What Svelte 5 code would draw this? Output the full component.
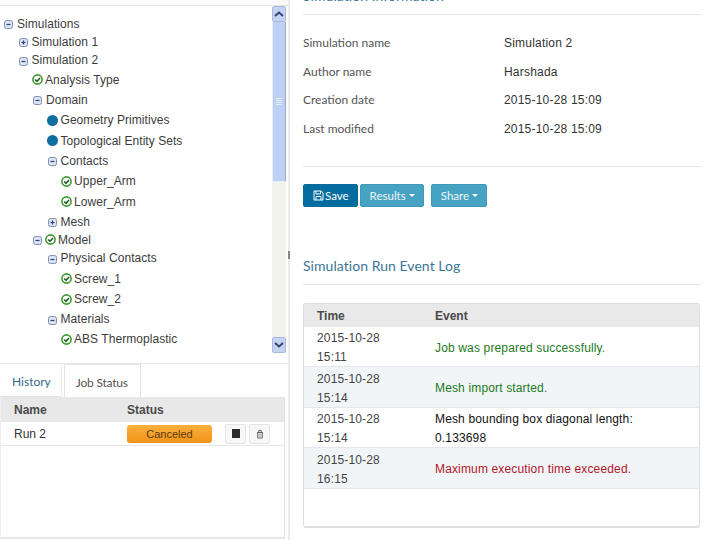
<script>
	const tree = [
		{ label: 'Simulations', depth: 0, icons: ['minus'], size: 'tight' },
		{ label: 'Simulation 1', depth: 1, icons: ['plus'], size: 'tight' },
		{ label: 'Simulation 2', depth: 1, icons: ['minus'], size: 'mid' },
		{ label: 'Analysis Type', depth: 2, icons: ['check'] },
		{ label: 'Domain', depth: 2, icons: ['minus'] },
		{ label: 'Geometry Primitives', depth: 3, icons: ['dot'] },
		{ label: 'Topological Entity Sets', depth: 3, icons: ['dot'] },
		{ label: 'Contacts', depth: 3, icons: ['minus'] },
		{ label: 'Upper_Arm', depth: 4, icons: ['check'] },
		{ label: 'Lower_Arm', depth: 4, icons: ['check'] },
		{ label: 'Mesh', depth: 3, icons: ['plus'], size: 'mesh' },
		{ label: 'Model', depth: 2, icons: ['minus', 'check'], size: 'model' },
		{ label: 'Physical Contacts', depth: 3, icons: ['minus'] },
		{ label: 'Screw_1', depth: 4, icons: ['check'] },
		{ label: 'Screw_2', depth: 4, icons: ['check'] },
		{ label: 'Materials', depth: 3, icons: ['minus'] },
		{ label: 'ABS Thermoplastic', depth: 4, icons: ['check'], size: 'last' },
	];

	const info = [
		['Simulation name', 'Simulation 2'],
		['Author name', 'Harshada'],
		['Creation date', '2015-10-28 15:09'],
		['Last modified', '2015-10-28 15:09'],
	];

	const events = [
		{ time: ['2015-10-28', '15:11'], text: ['Job was prepared successfully.'], kind: 'ok' },
		{ time: ['2015-10-28', '15:14'], text: ['Mesh import started.'], kind: 'ok' },
		{ time: ['2015-10-28', '15:14'], text: ['Mesh bounding box diagonal length:', '0.133698'], kind: '' },
		{ time: ['2015-10-28', '16:15'], text: ['Maximum execution time exceeded.'], kind: 'bad' },
	];
</script>

<div class="page">
	<aside class="left">
		<div class="tree-pane">
			<div class="tree">
				{#each tree as node}
					<div class="node {node.size ?? ''}" style="padding-left: {4 + node.depth * 14.5}px">
						{#each node.icons as icon}
							{#if icon === 'minus' || icon === 'plus'}
								<svg class="toggler" viewBox="0 0 9 9" width="9" height="9">
									<rect x="0.5" y="0.5" width="8" height="8" rx="2" fill="#dde3f0" stroke="#7d8fb5" />
									<path d="M2.5 4.5h4" stroke="#2f4578" stroke-width="1.2" />
									{#if icon === 'plus'}
										<path d="M4.5 2.5v4" stroke="#2f4578" stroke-width="1.2" />
									{/if}
								</svg>
							{:else if icon === 'check'}
								<svg class="check" viewBox="0 0 11 11" width="11" height="11">
									<circle cx="5.5" cy="5.5" r="4.6" fill="#fff" stroke="#3f9a32" stroke-width="1.6" />
									<path d="M3.2 5.5l1.8 1.8 3-3.3" fill="none" stroke="#1d5c22" stroke-width="1.5" />
								</svg>
							{:else}
								<span class="dot"></span>
							{/if}
						{/each}
						<span>{node.label}</span>
					</div>
				{/each}
			</div>
			<div class="scrollbar">
				<div class="sb-btn">
					<svg viewBox="0 0 10 6" width="10" height="6"><path d="M1 5l4-3.5L9 5" fill="none" stroke="#34466f" stroke-width="2" /></svg>
				</div>
				<div class="sb-thumb"><i></i><i></i><i></i><i></i></div>
				<div class="sb-track"></div>
				<div class="sb-btn">
					<svg viewBox="0 0 10 6" width="10" height="6"><path d="M1 1l4 3.5L9 1" fill="none" stroke="#34466f" stroke-width="2" /></svg>
				</div>
			</div>
		</div>

		<div class="tabs">
			<div class="tab">History</div>
			<div class="tab active">Job Status</div>
		</div>
		<div class="jobs">
			<div class="jobs-head">
				<span class="col-name">Name</span>
				<span>Status</span>
			</div>
			<div class="jobs-row">
				<span class="col-name">Run 2</span>
				<span class="badge">Canceled</span>
				<button class="mini stop" aria-label="Stop"><span></span></button>
				<button class="mini" aria-label="Delete">
					<svg viewBox="0 0 8 10" width="8" height="10">
						<path d="M1 3.5h6M1.7 3.5v5.5h4.6V3.5M2.8 3V1.4h2.4V3" fill="none" stroke="#666" />
						<path d="M2.5 5.2h3M2.5 7h3" stroke="#999" />
					</svg>
				</button>
			</div>
		</div>
	</aside>

	<div class="splitter"><span></span></div>

	<main class="right">
		<h2 class="clipped">Simulation Information</h2>
		<dl class="info">
			{#each info as [key, value]}
				<div class="info-row">
					<dt>{key}</dt>
					<dd>{value}</dd>
				</div>
			{/each}
		</dl>
		<div class="actions">
			<button class="btn primary">
				<svg viewBox="0 0 11 11" width="11" height="11">
					<path d="M1 1h7.2L10 2.8V10H1zM3 1v3h4.5V1M3 10V6.5h5V10" fill="none" stroke="#fff" />
				</svg>Save
			</button>
			<button class="btn info-btn">Results<b></b></button>
			<button class="btn info-btn share">Share<b></b></button>
		</div>

		<h2 class="log-title">Simulation Run Event Log</h2>
		<div class="log">
			<div class="log-head">
				<span class="col-time">Time</span>
				<span>Event</span>
			</div>
			{#each events as ev, i}
				<div class="log-row" class:odd={i % 2 === 1}>
					<div class="col-time">
						{#each ev.time as line}<div>{line}</div>{/each}
					</div>
					<div class="log-text {ev.kind}">
						{#each ev.text as line}<div>{line}</div>{/each}
					</div>
				</div>
			{/each}
		</div>
	</main>
</div>

<style>
	:global(body) {
		background: #fff;
	}

	.page {
		display: flex;
		width: 705px;
		height: 540px;
		overflow: hidden;
		font-family: 'Liberation Sans', Arial, sans-serif;
		font-size: 12px;
		color: #333;
	}

	.left {
		width: 288px;
		flex: none;
		display: flex;
		flex-direction: column;
		background: #fff;
	}

	.tree-pane {
		display: flex;
		height: 357px;
		margin-top: 5px;
		border-top: 1px solid #e4e4e4;
		border-bottom: 1px solid #e6e6e6;
		box-shadow: 0 -5px 0 #fafafa;
		box-sizing: content-box;
	}

	.tree {
		flex: 1;
		padding-top: 8.6px;
		letter-spacing: 0.05px;
	}

	.node {
		display: flex;
		align-items: center;
		gap: 3px;
		height: 20.33px;
		color: #3c3c3c;
	}

	.node.tight {
		height: 18px;
	}

	.node.mid {
		height: 18.9px;
	}

	.node.mesh {
		height: 19.7px;
	}

	.node.model {
		height: 16.8px;
	}

	.node.last {
		height: 19px;
	}

	.toggler {
		margin-right: 1px;
		margin-top: 2px;
	}

	.check {
		margin-left: -1px;
		margin-right: -1px;
	}

	.dot {
		width: 11px;
		height: 11px;
		margin-left: -1px;
		border-radius: 50%;
		background: #0f6d9f;
	}

	.scrollbar {
		width: 14px;
		margin-right: 2px;
		display: flex;
		flex-direction: column;
		height: 347px;
		flex: none;
	}

	.sb-btn {
		height: 16px;
		flex: none;
		display: flex;
		align-items: center;
		justify-content: center;
		background: #c5d3f3;
		border: 1px solid #e8eef9;
		outline: 1px solid #a9b9dd;
		outline-offset: -1px;
		border-radius: 2px;
		box-sizing: border-box;
	}

	.sb-thumb {
		height: 160px;
		flex: none;
		display: flex;
		flex-direction: column;
		align-items: center;
		justify-content: center;
		gap: 1px;
		background: #bfd0f5;
		border: 1px solid #e6edfb;
		border-top: 0;
		border-right-color: #98a9cf;
		box-sizing: border-box;
	}

	.sb-thumb i {
		display: block;
		width: 6px;
		height: 1px;
		background: #e6edfb;
	}

	.sb-track {
		flex: 1;
		background: #f2f2ec;
	}

	.tabs {
		display: flex;
		gap: 2px;
		height: 33px;
		box-sizing: border-box;
		font-family: Lato, sans-serif;
		font-size: 12px;
	}

	.tab {
		padding: 10px 10px 0 12px;
		color: #33698a;
		border-right: 1px solid #eee;
		border-bottom: 1px solid #e4e4e4;
	}

	.tab.active {
		color: #555;
		border: 1px solid #e4e4e4;
		border-bottom: 0;
		padding: 10px 12px 0 11px;
		letter-spacing: -0.2px;
	}

	.jobs {
		flex: 1;
		margin-right: 3px;
		border-right: 1px solid #e2e2e2;
		border-left: 1px solid #eee;
		border-bottom: 2px solid #e8e8e8;
		margin-bottom: 1px;
	}

	.jobs-head {
		display: flex;
		align-items: center;
		height: 25px;
		background: #e8e8e8;
		font-weight: bold;
		color: #4a4a4a;
	}

	.col-name {
		width: 113px;
		padding-left: 13px;
		flex: none;
	}

	.jobs-row {
		display: flex;
		align-items: center;
		height: 23px;
		border-bottom: 1px solid #e6e6e6;
		box-sizing: content-box;
	}

	.jobs-row .col-name {
		color: #333;
	}

	.badge {
		width: 85px;
		height: 18px;
		display: flex;
		align-items: center;
		justify-content: center;
		background: linear-gradient(#fbb03c, #f0921a);
		border-radius: 3px;
		font-size: 11px;
		color: #5a3a10;
		margin-right: 13px;
	}

	.mini {
		width: 21px;
		height: 20px;
		padding: 0;
		margin-right: 3px;
		display: flex;
		align-items: center;
		justify-content: center;
		background: #f7f7f7;
		border: 1px solid #e4e4e4;
		border-radius: 2px;
	}

	.stop span {
		display: block;
		width: 8px;
		height: 9px;
		background: #2b2b2b;
	}

	.splitter {
		width: 2px;
		flex: none;
		background: #e9e9e9;
		position: relative;
	}

	.splitter span {
		position: absolute;
		left: 0;
		top: 251px;
		width: 2px;
		height: 8px;
		background: #888;
	}

	.right {
		flex: 1;
		padding: 0 5px 0 13px;
		min-width: 0;
	}

	h2 {
		margin: 0;
		font-family: Lato, sans-serif;
		font-weight: 400;
		font-size: 14px;
		letter-spacing: 0.05px;
		color: #3b7595;
		border-bottom: 1px solid #e4e4e4;
	}

	.clipped {
		margin-top: -12px;
		height: 26px;
		line-height: 16px;
	}

	.info {
		margin: 13.5px 0 0;
		padding-bottom: 22.5px;
		border-bottom: 1px solid #e4e4e4;
	}

	.info-row {
		display: flex;
		align-items: center;
		height: 28.7px;
	}

	dt {
		width: 201px;
		font-family: Lato, sans-serif;
		color: #555;
		margin-top: -1px;
	}

	dd {
		margin: 0;
		color: #333;
		letter-spacing: 0.2px;
	}

	.actions {
		display: flex;
		gap: 2px;
		margin-top: 17px;
		height: 24px;
	}

	.btn {
		height: 23px;
		padding: 0 8px 0 9px;
		display: flex;
		align-items: center;
		gap: 1px;
		font-family: Lato, sans-serif;
		font-size: 11.5px;
		color: #fff;
		border: 1px solid #0a6a9a;
		border-radius: 2px;
		background: #056c9f;
	}

	.info-btn {
		background: #46a3c2;
		border-color: #3f99b8;
		color: #eef7fa;
	}

	.share {
		margin-left: 5px;
	}

	.btn b {
		display: inline-block;
		margin-left: 2px;
		border: 3px solid transparent;
		border-top-color: #fff;
		border-bottom: 0;
	}

	.log-title {
		margin-top: 49px;
		height: 28px;
		line-height: 17px;
		box-sizing: border-box;
	}

	.log {
		margin-top: 18px;
		height: 225px;
		border: 1px solid #dedede;
		border-bottom-width: 2px;
		border-radius: 3px;
		box-sizing: border-box;
		overflow: hidden;
	}

	.log-head {
		display: flex;
		align-items: center;
		height: 23px;
		padding-top: 1px;
		box-sizing: border-box;
		background: #e9e9e9;
		font-weight: bold;
		color: #4a4a4a;
	}

	.col-time {
		width: 118px;
		padding-left: 13px;
		flex: none;
		box-sizing: content-box;
	}

	.log-row {
		display: flex;
		align-items: center;
		height: 40.5px;
		padding-top: 3px;
		box-sizing: border-box;
		border-bottom: 1px solid #e4e8ec;
		line-height: 19px;
		letter-spacing: 0.15px;
	}

	.log-row.odd {
		background: #f1f5f8;
	}

	.log-text {
		color: #111;
	}

	.log-text.ok {
		color: #1c7a1c;
	}

	.log-text.bad {
		color: #b2182b;
	}

	.log-row .col-time {
		color: #444;
	}
</style>
